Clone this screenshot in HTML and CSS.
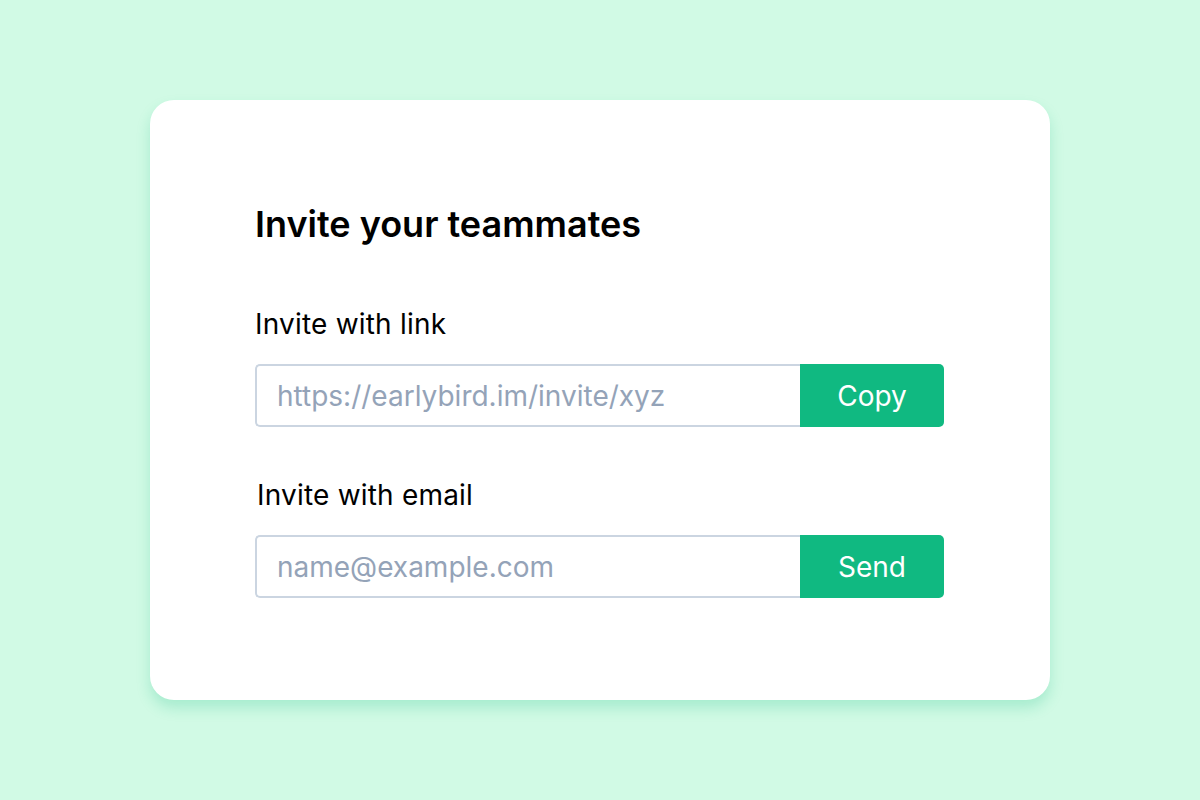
FILE: index.html
```html
<!DOCTYPE html>
<html lang="en">
<head>
<meta charset="utf-8">
<title>Invite your teammates</title>
<link rel="stylesheet" href="styles.css">
</head>
<body>
<main class="page">
  <section class="card">
    <h1 class="title">Invite your teammates</h1>
    <div class="group">
      <label class="label" for="link">Invite with link</label>
      <div class="row">
        <input class="field" id="link" type="text" placeholder="https://earlybird.im/invite/xyz">
        <button class="btn" type="button">Copy</button>
      </div>
    </div>
    <div class="group group-email">
      <label class="label label-email" for="email">Invite with email</label>
      <div class="row">
        <input class="field" id="email" type="email" placeholder="name@example.com">
        <button class="btn" type="button">Send</button>
      </div>
    </div>
  </section>
</main>
</body>
</html>
```

FILE: styles.css
```css
* { box-sizing: border-box; }
html, body {
  margin: 0;
  padding: 0;
}
body {
  background: #d1fae5;
  font-family: "Inter", "Noto Sans", sans-serif;
  color: #000;
  width: 1200px;
  height: 800px;
  overflow: hidden;
}
.page {
  padding-top: 100px;
  display: flex;
  justify-content: center;
}
.card {
  width: 900px;
  height: 600px;
  background: #fff;
  border-radius: 24px;
  box-shadow: 0 8px 14px rgba(16, 185, 129, 0.22);
  padding: 102px 106px 0 105px;
}
.title {
  margin: 0;
  font-size: 36px;
  line-height: 44px;
  font-weight: 600;
  letter-spacing: 0;
}
.group {
  margin-top: 60px;
}
.group-email {
  margin-top: 50px;
}
.label {
  display: block;
  font-size: 28px;
  line-height: 36px;
  font-weight: 400;
  letter-spacing: 0.2px;
  margin-bottom: 22px;
}
.label-email {
  margin-left: 2px;
}
.row {
  display: flex;
  height: 63px;
}
.field {
  flex: 1;
  min-width: 0;
  height: 100%;
  border: 2px solid #cbd5e1;
  border-right: none;
  border-radius: 5px 0 0 5px;
  padding: 0 20px;
  font-family: inherit;
  font-size: 28px;
  color: #334155;
  background: #fff;
  outline: none;
}
.field::placeholder {
  color: #94a3b8;
}
.btn {
  width: 144px;
  height: 100%;
  border: none;
  background: #10b981;
  color: #fff;
  font-family: inherit;
  font-size: 28px;
  border-radius: 0 5px 5px 0;
  padding: 0;
  cursor: pointer;
}
```
